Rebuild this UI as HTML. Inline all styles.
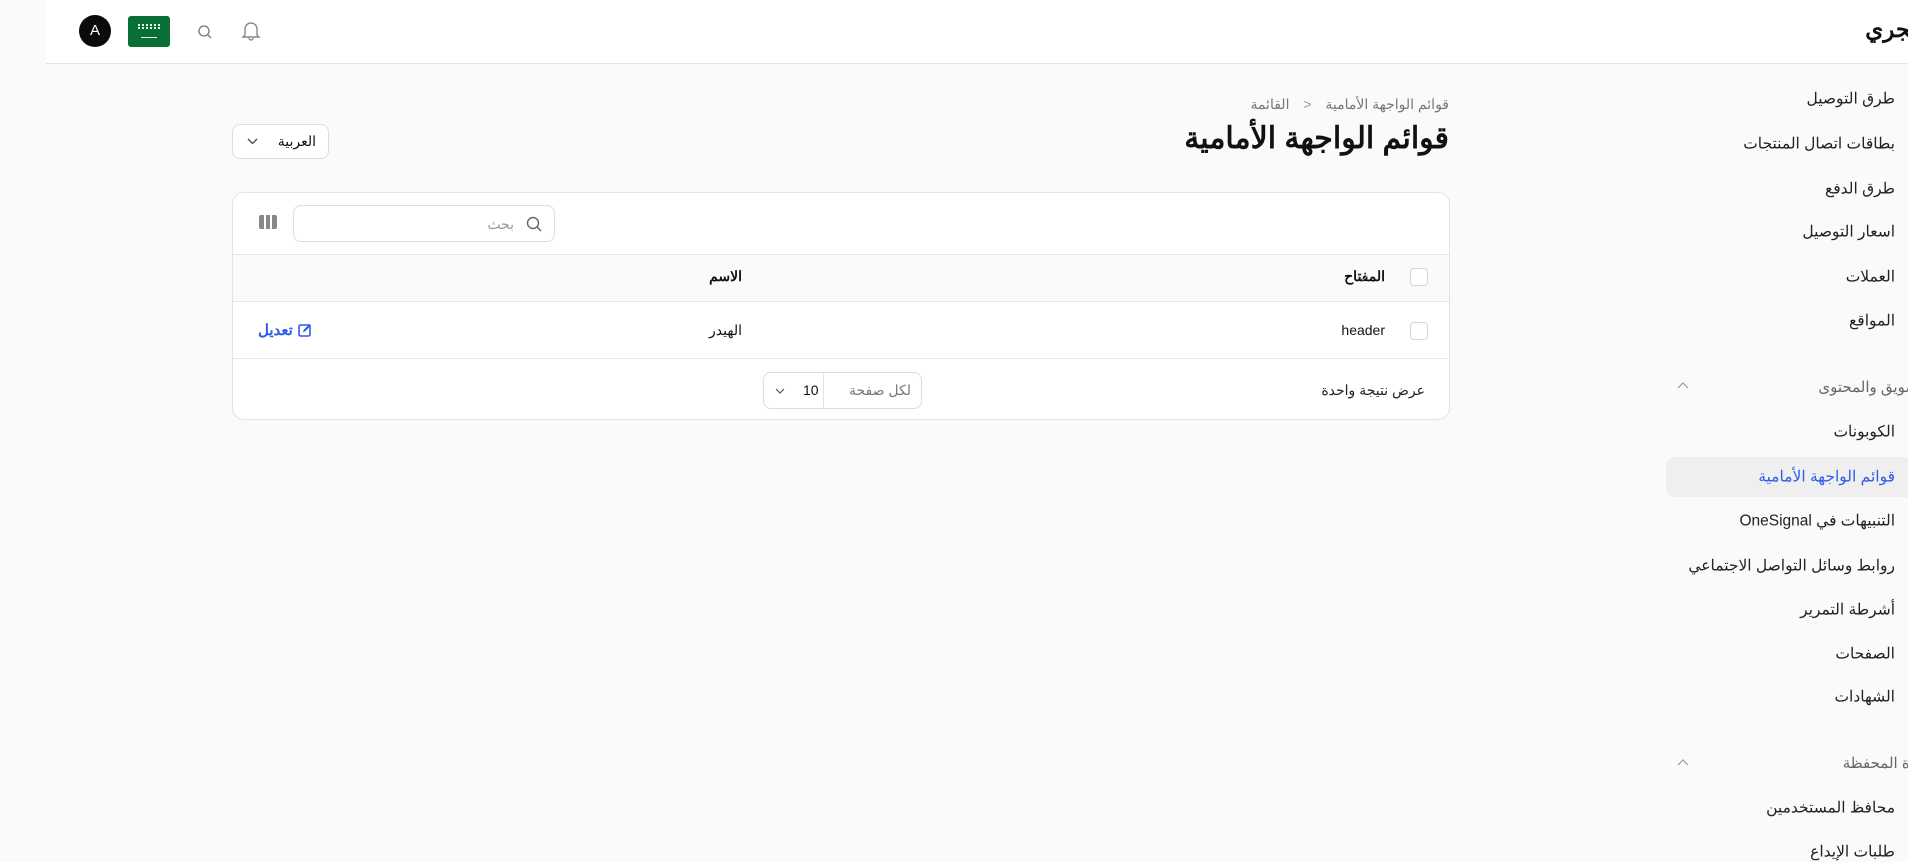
<!DOCTYPE html>
<html lang="ar"><head><meta charset="utf-8"><style>
*{box-sizing:border-box;margin:0;padding:0}
body{width:1908px;height:860px;overflow:hidden;background:#fafafa;font-family:"Liberation Sans","Noto Sans CJK SC",sans-serif;color:#111;position:relative}
.a{position:absolute;white-space:nowrap}
.r{direction:rtl}
.si{position:absolute;right:13px;font-size:15.5px;color:#222;direction:rtl;white-space:nowrap;transform:translateY(-50%)}
.sh{position:absolute;right:-24px;font-size:15px;color:#666;direction:rtl;white-space:nowrap;transform:translateY(-50%)}
.cb{position:absolute;width:18px;height:18px;border:1px solid #d4d4d4;border-radius:4px;background:#fff}
</style></head><body>
<!-- sidebar -->
<div class="sh" style="top:52px;color:#999">الإعدادات</div>
<div class="si" style="top:99px">طرق التوصيل</div>
<div class="si" style="top:144px">بطاقات اتصال المنتجات</div>
<div class="si" style="top:189px">طرق الدفع</div>
<div class="si" style="top:232px">اسعار التوصيل</div>
<div class="si" style="top:277px">العملات</div>
<div class="si" style="top:321px">المواقع</div>
<div class="sh" style="top:387px">التسويق والمحتوى</div>
<svg class="a" style="left:1677px;top:381px" width="12" height="8" viewBox="0 0 12 8" fill="none" stroke="#999" stroke-width="1.2"><path d="M1 7l5-5 5 5"/></svg>
<div class="si" style="top:432px">الكوبونات</div>
<div class="a" style="left:1666px;top:457px;width:260px;height:40px;border-radius:8px;background:#efefef"></div>
<div class="si" style="top:477px;color:#2e5bea">قوائم الواجهة الأمامية</div>
<div class="si" style="top:521px">التنبيهات في OneSignal</div>
<div class="si" style="top:566px">روابط وسائل التواصل الاجتماعي</div>
<div class="si" style="top:610px">أشرطة التمرير</div>
<div class="si" style="top:654px">الصفحات</div>
<div class="si" style="top:697px">الشهادات</div>
<div class="sh" style="top:763px">إدارة المحفظة</div>
<svg class="a" style="left:1677px;top:758px" width="12" height="8" viewBox="0 0 12 8" fill="none" stroke="#999" stroke-width="1.2"><path d="M1 7l5-5 5 5"/></svg>
<div class="si" style="top:808px">محافظ المستخدمين</div>
<div class="si" style="top:852px">طلبات الإيداع</div>
<!-- top bar -->
<div class="a" style="left:46px;top:0;width:1862px;height:64px;background:#fff;border-bottom:1px solid #e3e3e3"></div>
<div class="a" style="left:79px;top:15px;width:32px;height:32px;border-radius:50%;background:#0b0b0d;color:#fff;font-size:15px;line-height:32px;text-align:center">A</div>
<div class="a" style="left:128px;top:16px;width:42px;height:31px;border-radius:3px;background:#0a6e37">
 <div class="a" style="left:10px;top:8px;width:22px;height:5px;border-top:2px dotted #dfe;border-bottom:2px dotted #dfe"></div>
 <div class="a" style="left:13px;top:21px;width:16px;height:1px;background:#eee"></div></div>
<svg class="a" style="left:197px;top:24px" width="16" height="16" viewBox="0 0 16 16" fill="none" stroke="#777" stroke-width="1.3"><circle cx="7" cy="7" r="5"/><path d="M10.6 10.6L14 14"/></svg>
<svg class="a" style="left:241px;top:20px" width="20" height="22" viewBox="0 0 20 22" fill="none" stroke="#888" stroke-width="1.4"><path d="M4 15V9a6 6 0 0112 0v6l2 2H2z"/><path d="M8 18a2 2 0 004 0"/></svg>
<div class="a r" style="right:-22px;top:16px;font-size:23px;font-weight:bold;color:#111">متجري</div>
<!-- page header -->
<div class="a r" style="right:459px;top:96px;font-size:14px;color:#777">قوائم الواجهة الأمامية <span style="margin:0 10px;color:#999">&lt;</span> القائمة</div>
<div class="a r" style="right:459px;top:121px;font-size:30px;font-weight:bold;color:#111">قوائم الواجهة الأمامية</div>
<div class="a" style="left:232px;top:124px;width:97px;height:35px;border:1px solid #ddd;border-radius:8px;background:#fff">
 <div class="a r" style="right:12px;top:8px;font-size:14px">العربية</div>
 <svg class="a" style="left:14px;top:13px" width="11" height="7" viewBox="0 0 11 7" fill="none" stroke="#444" stroke-width="1.3"><path d="M1 1l4.5 4.5L10 1"/></svg></div>
<!-- card -->
<div class="a" style="left:232px;top:192px;width:1218px;height:228px;background:#fff;border:1px solid #e3e3e3;border-radius:12px;overflow:hidden">
 <div class="a" style="left:26px;top:22px;width:18px;height:14px;display:flex;gap:2px"><i style="flex:1;background:#888;border-radius:2px 0 0 2px"></i><i style="flex:1;background:#888"></i><i style="flex:1;background:#888;border-radius:0 2px 2px 0"></i></div>
 <div class="a" style="left:60px;top:12px;width:262px;height:37px;border:1px solid #ddd;border-radius:8px">
  <svg class="a" style="right:12px;top:10px" width="16" height="16" viewBox="0 0 16 16" fill="none" stroke="#666" stroke-width="1.4"><circle cx="7" cy="7" r="5.5"/><path d="M11 11l4 4"/></svg>
  <div class="a r" style="right:40px;top:10px;font-size:14px;color:#999">بحث</div></div>
 <div class="a" style="left:0;top:61px;width:100%;height:48px;background:#fafafa;border-top:1px solid #e6e6e6;border-bottom:1px solid #e6e6e6"></div>
 <div class="cb" style="left:1177px;top:75px"></div>
 <div class="a r" style="right:64px;top:75px;font-size:14px;font-weight:bold">المفتاح</div>
 <svg class="a" style="left:1125px;top:82px" width="10" height="6" viewBox="0 0 10 6" fill="none" stroke="#999" stroke-width="1.1"><path d="M1 1l4 4 4-4"/></svg>
 <div class="a r" style="right:707px;top:75px;font-size:14px;font-weight:bold">الاسم</div>
 <div class="cb" style="left:1177px;top:129px"></div>
 <div class="a" style="right:64px;top:129px;font-size:14px">header</div>
 <div class="a r" style="right:707px;top:129px;font-size:14px">الهيدر</div>
 <div class="a" style="left:25px;top:128px;font-size:15px;font-weight:bold;color:#2e5bea;display:flex;align-items:center;gap:5px"><span class="r">تعديل</span>
  <svg width="14" height="14" viewBox="0 0 14 14"><rect x="1" y="2" width="11" height="11" rx="1.5" fill="none" stroke="#2e5bea" stroke-width="1.6"/><path d="M5 9.5l.8-2.8L11.5 1 13 2.5 7.3 8.2z" fill="#2e5bea"/></svg></div>
 <div class="a" style="left:0;top:165px;width:100%;height:1px;background:#e6e6e6"></div>
 <div class="a r" style="right:24px;top:189px;font-size:14px;color:#222">عرض نتيجة واحدة</div>
 <div class="a" style="left:530px;top:179px;width:159px;height:37px;border:1px solid #ddd;border-radius:8px">
  <div class="a r" style="right:10px;top:9px;font-size:14px;color:#777">لكل صفحة</div>
  <div class="a" style="left:59px;top:0;width:1px;height:35px;background:#e3e3e3"></div>
  <div class="a" style="left:39px;top:9px;font-size:14px">10</div>
  <svg class="a" style="left:11px;top:15px" width="10" height="6" viewBox="0 0 10 6" fill="none" stroke="#555" stroke-width="1.2"><path d="M1 1l4 4 4-4"/></svg></div>
</div>
</body></html>
